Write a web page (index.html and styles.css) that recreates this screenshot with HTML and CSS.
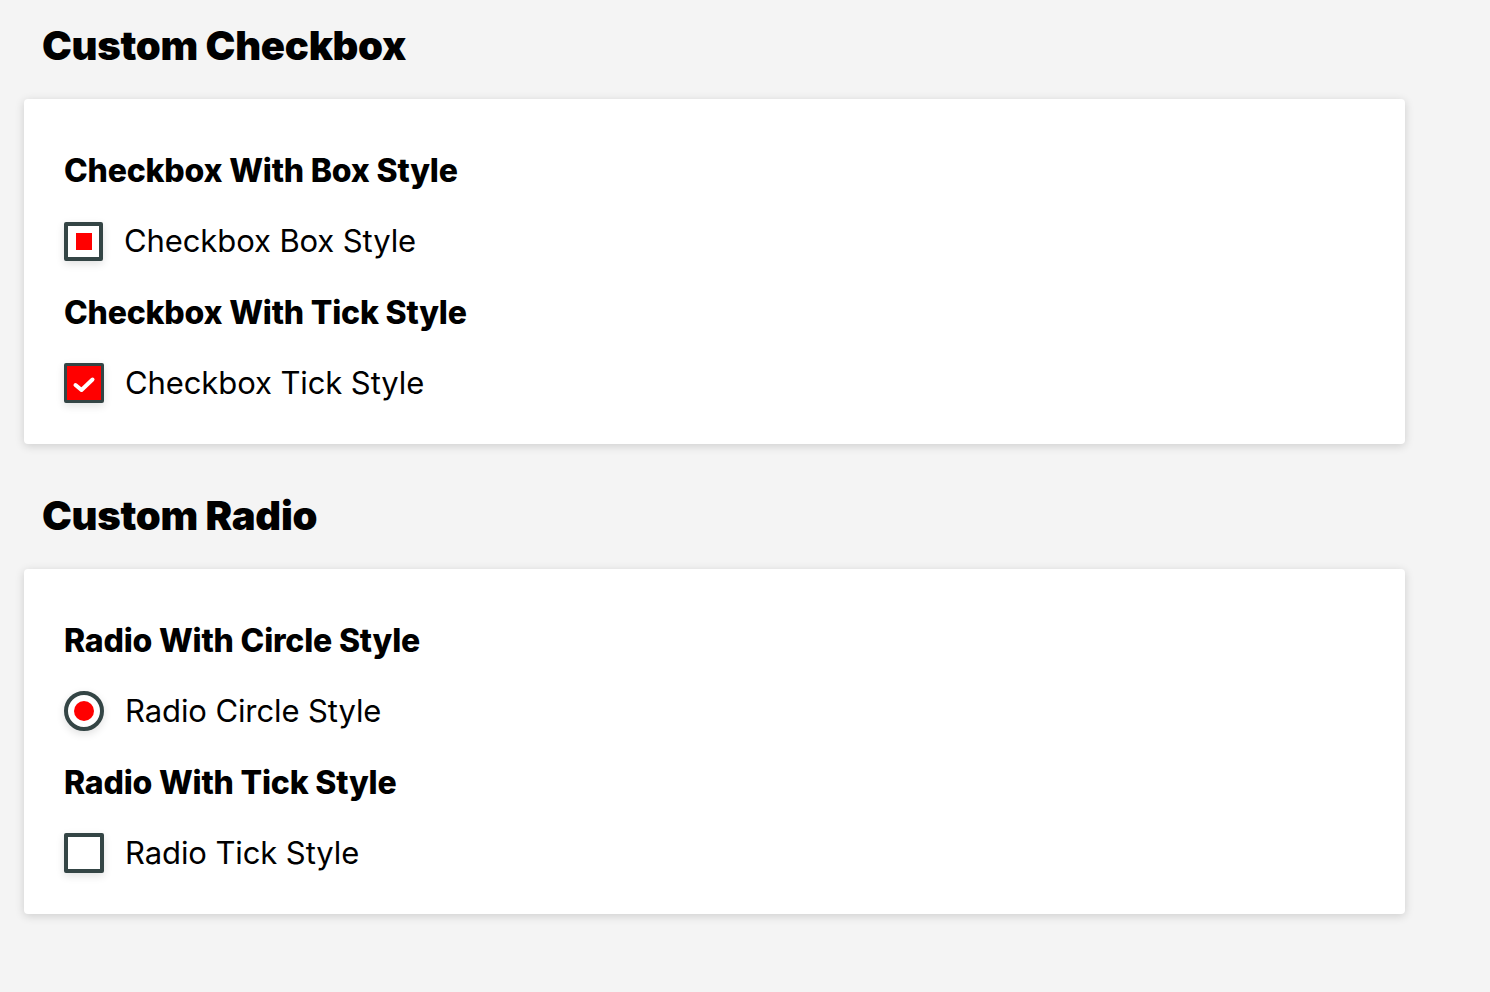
FILE: index.html
```html
<!DOCTYPE html>
<html lang="en">
<head>
<meta charset="utf-8">
<title>Custom Checkbox</title>
<link rel="stylesheet" href="styles.css">
</head>
<body>
<main class="page">
  <section class="block">
    <h1 class="block-title">Custom Checkbox</h1>
    <div class="card">
      <h3 class="group-title">Checkbox With Box Style</h3>
      <label class="option">
        <span class="ctl ctl-box is-checked"><span class="ctl-fill"></span></span>
        <span class="option-text">Checkbox Box Style</span>
      </label>
      <h3 class="group-title">Checkbox With Tick Style</h3>
      <label class="option">
        <span class="ctl ctl-tick is-checked">
          <svg class="tick" viewBox="0 0 24 24" width="24" height="24"><path d="M3.5 13 L9.5 18 L20.5 7.5" fill="none" stroke="#fff" stroke-width="4" stroke-linecap="round" stroke-linejoin="round"/></svg>
        </span>
        <span class="option-text">Checkbox Tick Style</span>
      </label>
    </div>
  </section>
  <section class="block">
    <h1 class="block-title">Custom Radio</h1>
    <div class="card">
      <h3 class="group-title">Radio With Circle Style</h3>
      <label class="option">
        <span class="ctl ctl-radio is-checked"><span class="ctl-dot"></span></span>
        <span class="option-text">Radio Circle Style</span>
      </label>
      <h3 class="group-title">Radio With Tick Style</h3>
      <label class="option">
        <span class="ctl ctl-tick"></span>
        <span class="option-text">Radio Tick Style</span>
      </label>
    </div>
  </section>
</main>
</body>
</html>
```
FILE: styles.css
```css
* { box-sizing: border-box; }
html, body { margin: 0; padding: 0; }
body {
  background: #f4f4f4;
  font-family: Inter, "Noto Sans", "Liberation Sans", sans-serif;
  color: #000;
}
.page {
  width: 1381px;
  margin-left: 24px;
  padding-top: 22px;
  padding-bottom: 78px;
}
.block + .block { margin-top: 48px; }
.block-title {
  margin: 0 0 29px 18px;
  font-size: 40px;
  line-height: 48px;
  font-weight: 900;
  letter-spacing: -0.3px;
}
.card {
  background: #fff;
  border-radius: 4px;
  box-shadow: 0 2px 10px rgba(0,0,0,0.16);
  padding: 52px 40px 41px;
  height: 345px;
}
.group-title {
  margin: 0 0 30px;
  font-size: 32px;
  line-height: 40px;
  font-weight: 800;
  letter-spacing: -0.2px;
}
.option {
  display: flex;
  align-items: center;
  gap: 21px;
  height: 40px;
  margin-bottom: 32px;
}
.option:last-child { margin-bottom: 0; }
.option-text {
  font-size: 31px;
  line-height: 40px;
  font-weight: 400;
  letter-spacing: -0.1px;
}
.ctl {
  flex: none;
  width: 40px;
  height: 40px;
  border: 4px solid #344545;
  border-radius: 2px;
  background: #fff;
  display: flex;
  align-items: center;
  justify-content: center;
  box-shadow: 0 3px 8px rgba(0,0,0,0.12);
}
.ctl-box { width: 39px; height: 39px; }
.ctl-fill { width: 16px; height: 17px; background: #ff0000; }
.ctl-tick.is-checked { background: #ff0000; border-width: 3px; }
.ctl-radio { border-radius: 50%; }
.ctl-dot { width: 20px; height: 20px; border-radius: 50%; background: #ff0000; }
.tick { display: block; margin-top: 2px; }
```
